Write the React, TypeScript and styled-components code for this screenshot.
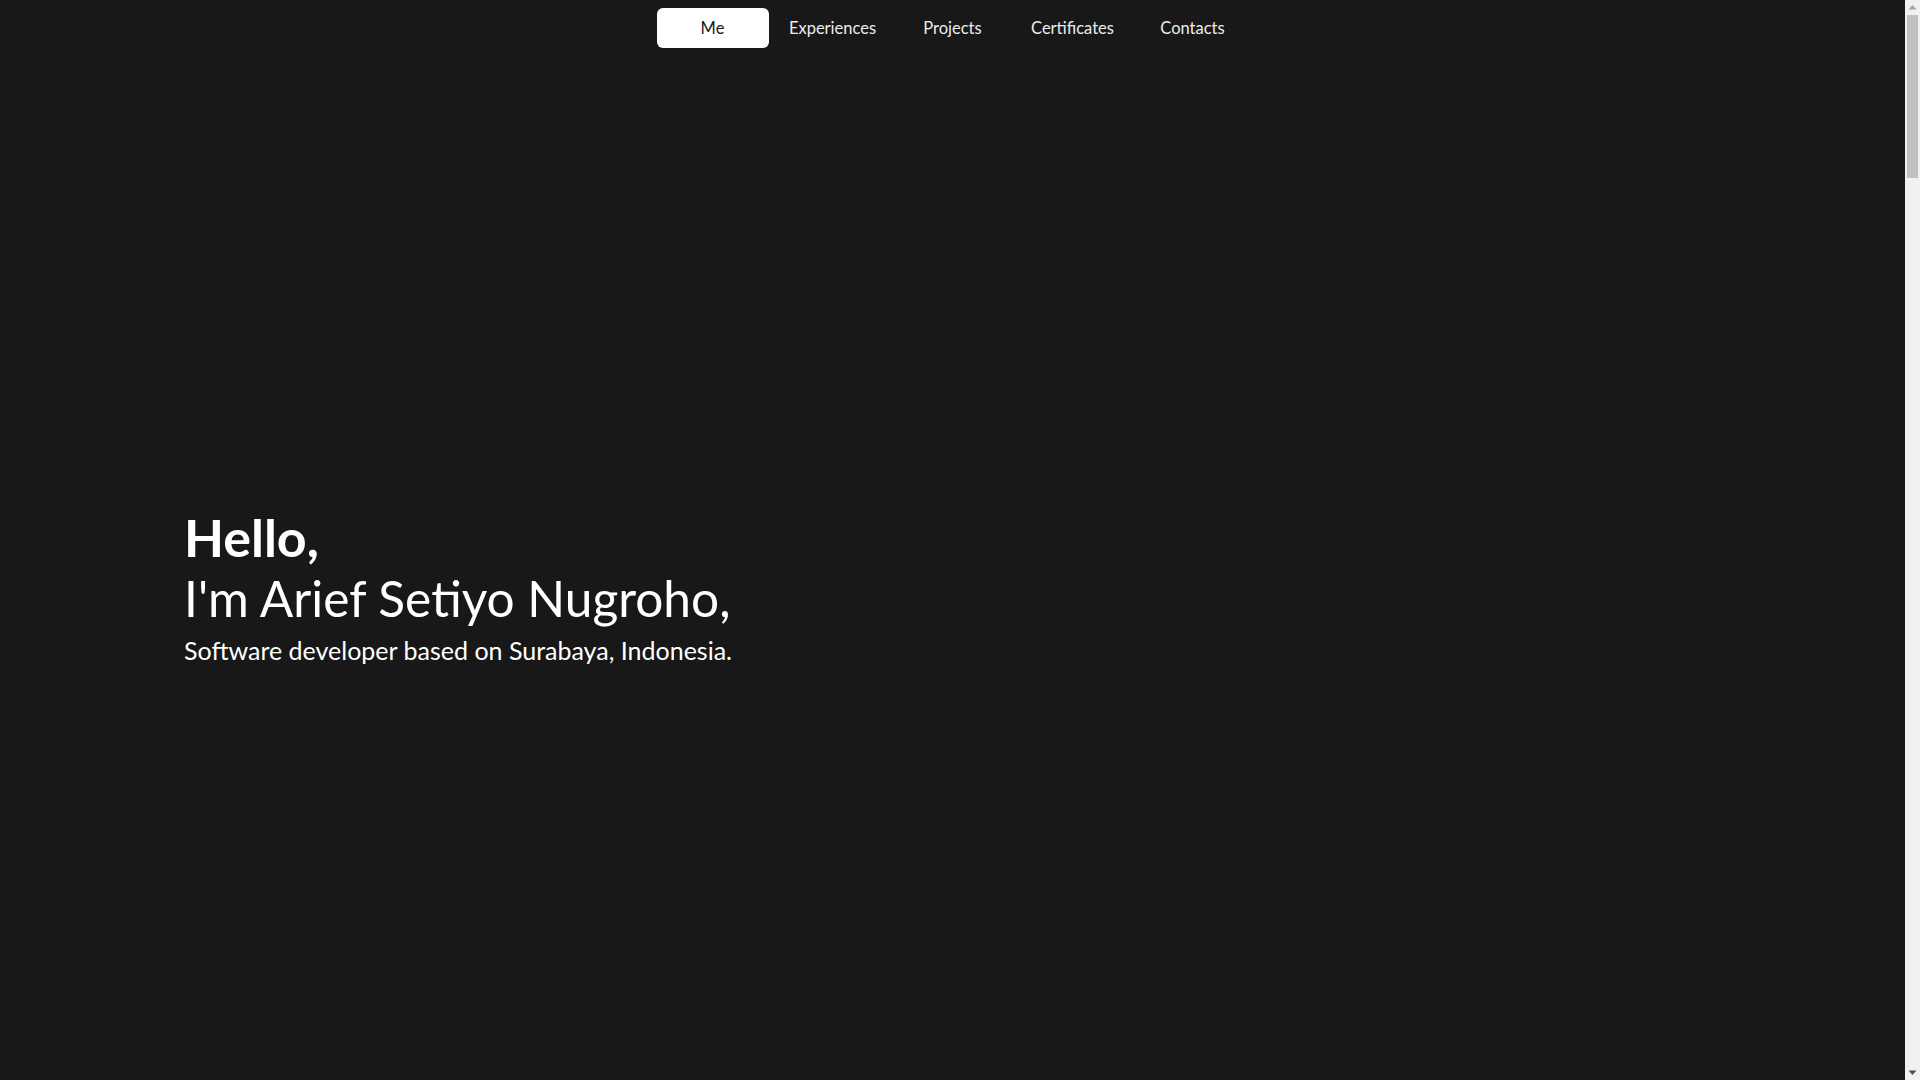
import styled, { createGlobalStyle } from 'styled-components';

const GlobalStyle = createGlobalStyle`
  * {
    box-sizing: border-box;
  }
  html,
  body {
    margin: 0;
    padding: 0;
    background: #181818;
    color: #ffffff;
    font-family: Lato, 'Noto Sans', sans-serif;
  }
`;

const NAV_ITEMS = ['Me', 'Experiences', 'Projects', 'Certificates', 'Contacts'];

export default function App() {
  return (
    <>
      <GlobalStyle />
      <Page>
        <NavBar>
          <NavList>
            {NAV_ITEMS.map((item, i) => (
              <NavItem key={item}>
                <NavButton active={i === 0}>{item}</NavButton>
              </NavItem>
            ))}
          </NavList>
        </NavBar>
        <Hero id="me">
          <Greeting>Hello,</Greeting>
          <Name>I'm Arief Setiyo Nugroho,</Name>
          <Tagline>Software developer based on Surabaya, Indonesia.</Tagline>
        </Hero>
        <Section id="experiences" />
        <Section id="projects" />
        <Section id="certificates" />
        <Section id="contacts" />
      </Page>
      <ScrollRail>
        <ScrollArrow>
          <svg width="15" height="15" viewBox="0 0 15 15">
            <polygon points="3.5,9.5 7.5,5 11.5,9.5" fill="#a3a3a3" />
          </svg>
        </ScrollArrow>
        <ScrollTrack>
          <ScrollThumb />
        </ScrollTrack>
        <ScrollArrow>
          <svg width="15" height="15" viewBox="0 0 15 15">
            <polygon points="3.5,5.5 7.5,10 11.5,5.5" fill="#505050" />
          </svg>
        </ScrollArrow>
      </ScrollRail>
    </>
  );
}

const Page = styled.main`
  margin-right: 15px;
  background: #181818;
`;

const NavBar = styled.nav`
  display: flex;
  justify-content: center;
  padding: 8px 0;
  background: #181818;
`;

const NavList = styled.ul`
  display: flex;
  margin: 0;
  padding: 0;
  list-style: none;
`;

const NavItem = styled.li`
  width: 120px;
  display: flex;
  justify-content: center;
`;

const NavButton = styled.button<{ active?: boolean }>`
  width: 112px;
  height: 40px;
  padding: 0;
  border: none;
  border-radius: 6px;
  font-family: inherit;
  font-size: 16.5px;
  cursor: pointer;
  background: ${({ active }) => (active ? '#ffffff' : 'transparent')};
  color: ${({ active }) => (active ? '#181818' : '#ececec')};
`;

const Hero = styled.section`
  height: 1080px;
  display: flex;
  flex-direction: column;
  justify-content: center;
  padding: 0 184px 15px;
`;

const Greeting = styled.h1`
  margin: 0 0 5px;
  font-size: 52px;
  line-height: 53px;
  font-weight: 700;
`;

const Name = styled.h2`
  margin: 0;
  font-size: 49.6px;
  line-height: 58px;
  font-weight: 400;
`;

const Tagline = styled.p`
  margin: 7px 0 0;
  font-size: 25px;
  line-height: 32px;
`;

const Section = styled.section`
  min-height: 1458px;
`;

const ScrollRail = styled.aside`
  position: fixed;
  top: 0;
  right: 0;
  bottom: 0;
  width: 15px;
  display: flex;
  flex-direction: column;
  background: #f1f1f1;
`;

const ScrollArrow = styled.div`
  height: 15px;
  display: flex;

  svg {
    display: block;
  }
`;

const ScrollTrack = styled.div`
  flex: 1;
  padding: 0 2px;
`;

const ScrollThumb = styled.div`
  height: 163px;
  background: #c1c1c1;
`;
